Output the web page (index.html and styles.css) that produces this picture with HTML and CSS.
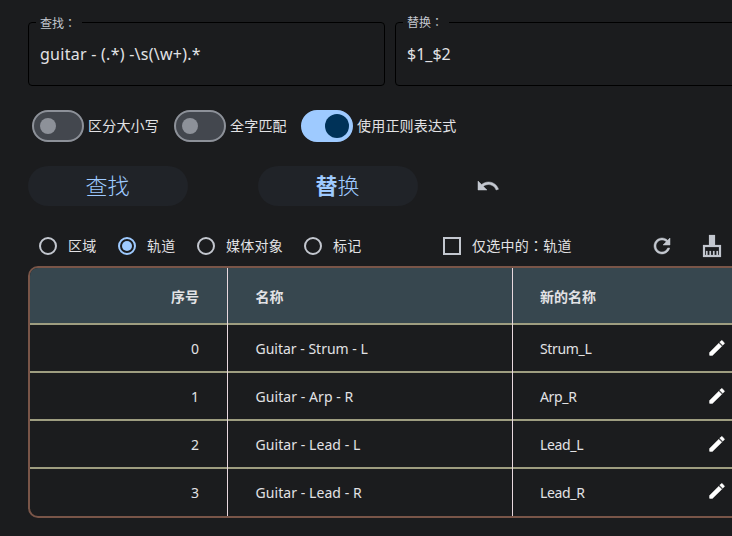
FILE: index.html
```html
<!DOCTYPE html>
<html lang="zh-CN">
<head>
<meta charset="utf-8">
<title>查找和替换</title>
<link rel="stylesheet" href="styles.css">
</head>
<body>
<main class="app">
  <section class="fields">
    <fieldset class="field"><legend class="low">查找<span class="colon" lang="zh-TW">：</span></legend><span class="value find-value">guitar - (.*) -\s(\w+).*</span></fieldset>
    <fieldset class="field"><legend>替换<span class="colon" lang="zh-TW">：</span></legend><span class="value">$1_$2</span></fieldset>
  </section>
  <section class="switches">
    <label class="option"><span class="switch"></span>区分大小写</label>
    <label class="option whole"><span class="switch"></span>全字匹配</label>
    <label class="option"><span class="switch on"></span>使用正则表达式</label>
  </section>
  <section class="actions">
    <button class="btn">查找</button>
    <button class="btn"><b>替</b>换</button>
    <svg class="icon undo" viewBox="0 0 24 24"><path d="M12.5 8c-2.65 0-5.05.99-6.9 2.6L2 7v9h9l-3.62-3.62c1.39-1.16 3.16-1.88 5.12-1.88 3.54 0 6.55 2.31 7.6 5.5l2.37-.78C21.08 11.03 17.15 8 12.5 8z"/></svg>
  </section>
  <section class="filters">
    <label class="choice area"><span class="radio"></span>区域</label>
    <label class="choice track"><span class="radio checked"></span>轨道</label>
    <label class="choice media"><span class="radio"></span>媒体对象</label>
    <label class="choice marker"><span class="radio"></span>标记</label>
    <label class="choice only"><span class="box"></span><span>仅选中的<span class="colon" lang="zh-TW">：</span>轨道</span></label>
    <svg class="icon refresh" viewBox="0 0 24 24"><path d="M17.65 6.35C16.2 4.9 14.21 4 12 4c-4.42 0-7.99 3.58-7.99 8s3.57 8 7.99 8c3.73 0 6.84-2.55 7.73-6h-2.08c-.82 2.33-3.04 4-5.65 4-3.31 0-6-2.69-6-6s2.69-6 6-6c1.66 0 3.14.69 4.22 1.78L13 11h7V4l-2.35 2.35z"/></svg>
    <svg class="icon clean" viewBox="0 0 24 24"><path fill-rule="evenodd" d="M15 11V1H9v10H3v12h18V11zM5 13h14v8h-1v-4h-1.500v4h-2v-4H13v4h-2v-4H9.500v4h-2v-4H6v4H5z"/></svg>
  </section>
  <section class="table">
    <div class="row head"><div class="num">序号</div><div>名称</div><div>新的名称</div></div>
    <div class="row"><div class="num">0</div><div>Guitar - Strum - L</div><div class="renamed">Strum_L<svg class="edit" viewBox="0 0 24 24"><path d="M3 17.500V20.500q0 .5.5.5H6.500L17.800 9.900 14.100 6.200 3 17.500zM20.700 7c.4-.4.4-1 0-1.400L18.400 3.300c-.4-.4-1-.4-1.400 0l-1.800 1.800 3.700 3.700L20.700 7z"/></svg></div></div>
    <div class="row"><div class="num">1</div><div class="loose">Guitar - Arp - R</div><div class="renamed">Arp_R<svg class="edit" viewBox="0 0 24 24"><path d="M3 17.500V20.500q0 .5.5.5H6.500L17.800 9.900 14.100 6.200 3 17.500zM20.700 7c.4-.4.4-1 0-1.400L18.400 3.300c-.4-.4-1-.4-1.400 0l-1.800 1.800 3.700 3.700L20.700 7z"/></svg></div></div>
    <div class="row"><div class="num">2</div><div class="loose">Guitar - Lead - L</div><div class="renamed">Lead_L<svg class="edit" viewBox="0 0 24 24"><path d="M3 17.500V20.500q0 .5.5.5H6.500L17.800 9.900 14.100 6.200 3 17.500zM20.700 7c.4-.4.4-1 0-1.400L18.400 3.300c-.4-.4-1-.4-1.400 0l-1.800 1.800 3.700 3.700L20.700 7z"/></svg></div></div>
    <div class="row"><div class="num">3</div><div class="loose">Guitar - Lead - R</div><div class="renamed">Lead_R<svg class="edit" viewBox="0 0 24 24"><path d="M3 17.500V20.500q0 .5.5.5H6.500L17.800 9.900 14.100 6.200 3 17.500zM20.700 7c.4-.4.4-1 0-1.400L18.400 3.300c-.4-.4-1-.4-1.400 0l-1.800 1.800 3.700 3.700L20.700 7z"/></svg></div></div>
  </section>
</main>
</body>
</html>
```

FILE: styles.css
```css
* { box-sizing: border-box; }
body {
  margin: 0;
  background: #1b1c1e;
  color: #e2e2e5;
  font: 14px/20px "Noto Sans", "Noto Sans CJK SC", sans-serif;
  overflow: hidden;
}
.app { height: 536px; padding: 13px 0 0 28px; overflow: hidden; }
.colon { font-family: "Noto Sans CJK TC", sans-serif; line-height: 1; }
.fields { display: flex; gap: 10px; width: 724px; height: 73px; }
.field {
  flex: 0 0 357px;
  min-width: 0;
  height: 73px;
  margin: 0;
  padding: 0 11px;
  border: 1px solid #000;
  border-radius: 4px;
}
.field legend {
  width: 46px;
  height: 18px;
  margin-left: -4px;
  padding: 0 0 0 4px;
  color: #c3c7cf;
  font-size: 12px;
  line-height: 20px;
  white-space: nowrap;
}
.field .low { line-height: 22px; }
.value { display: block; margin-top: 12px; font-size: 16px; line-height: 22px; }
.find-value { letter-spacing: .26px; }
.switches { display: flex; gap: 15px; height: 32px; margin: 24px 0 0 4px; }
.option { display: flex; align-items: center; gap: 4px; white-space: nowrap; letter-spacing: .2px; }
.whole { width: 112px; }
.switch {
  flex: none;
  display: flex;
  align-items: center;
  width: 52px;
  height: 32px;
  padding: 0 6px;
  border: 2px solid #8d9199;
  border-radius: 16px;
  background: #43474e;
}
.switch::before { content: ""; width: 16px; height: 16px; border-radius: 50%; background: #8d9199; }
.switch.on { justify-content: flex-end; padding: 0 2px; border-color: #9ecaff; background: #9ecaff; }
.switch.on::before { width: 24px; height: 24px; background: #003258; }
.actions { display: flex; align-items: center; height: 40px; margin-top: 24px; }
.btn {
  width: 160px;
  height: 40px;
  margin-right: 70px;
  padding: 0 1px 4px 0;
  border: 0;
  border-radius: 20px;
  background: #202328;
  color: #9ecaff;
  font: 300 22px/36px "Noto Sans CJK SC", sans-serif;
}
.btn b { font-weight: 700; }
.icon { flex: none; width: 24px; height: 24px; fill: #c3c7cf; stroke: #c3c7cf; stroke-width: .5; }
.undo { margin-left: -12px; }
.filters { display: flex; align-items: center; height: 40px; margin: 20px 0 0 11px; }
.choice { flex: none; display: flex; align-items: center; gap: 11px; white-space: nowrap; letter-spacing: .25px; }
.radio {
  display: grid;
  place-items: center;
  width: 18px;
  height: 18px;
  border: 2px solid #c3c7cf;
  border-radius: 50%;
}
.radio.checked { border-color: #9ecaff; }
.radio.checked::before { content: ""; width: 10px; height: 10px; border-radius: 50%; background: #9ecaff; }
.area, .track { width: 79px; }
.media { width: 107px; }
.marker { width: 139px; }
.only { width: 207px; }
.box { width: 18px; height: 18px; border: 2px solid #c3c7cf; }
.clean { margin-left: 26px; stroke-width: .2; }
.table {
  width: 760px;
  height: 252px;
  border: 2px solid #795548;
  border-radius: 10px;
  overflow: hidden;
}
.row {
  display: grid;
  grid-template-columns: 198px 285px 1fr;
  height: 48px;
  border-bottom: 2px solid #9e9d80;
}
.row:last-child { height: 47px; border-bottom: 0; }
.row > div { display: flex; align-items: center; height: 48px; padding: 0 28px 0 27.500px; border-right: 1px solid #e8d8de; }
.row:last-child > div { height: 47px; }
.row .num { justify-content: flex-end; }
.row > div:last-child { border-right: 0; padding-left: 27px; }
.row .loose { letter-spacing: .07px; }
.row .renamed { padding-right: 59px; letter-spacing: -.35px; }
.row.head { height: 57px; background: #37474f; font-weight: 700; }
.row.head > div { height: 57px; }
.edit { width: 20px; height: 20px; margin: -3px 0 0 auto; fill: #fff; stroke: #fff; stroke-width: .5; }
```
